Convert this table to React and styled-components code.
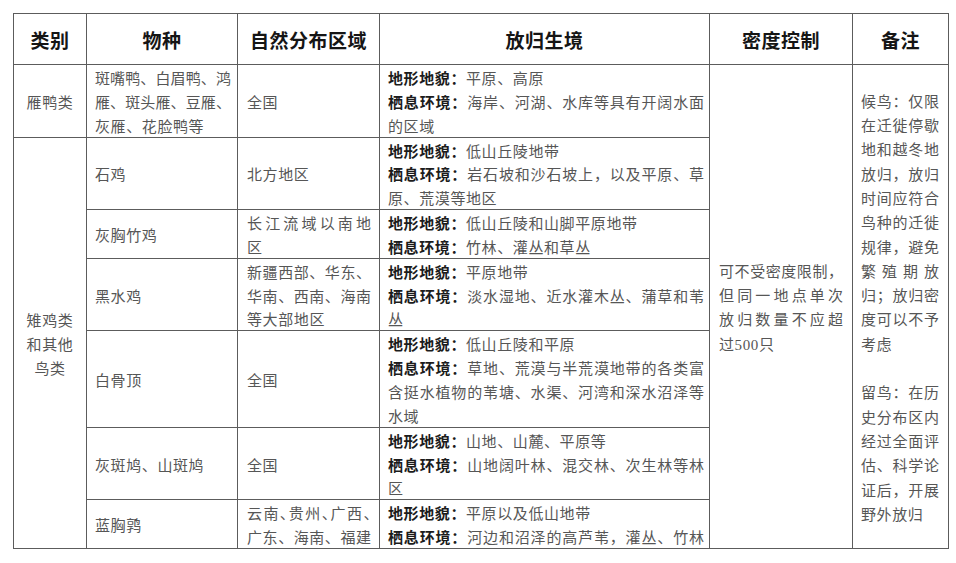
import React from 'react';
import styled, { createGlobalStyle } from 'styled-components';

const Global = createGlobalStyle`
  html, body { margin: 0; padding: 0; background: #ffffff; }
  body { font-family: "Liberation Serif", "Noto Sans CJK SC", serif; }
`;

const Page = styled.div`
  padding: 13px 9px 0 13px;
`;

const Table = styled.table`
  width: 935px;
  border-collapse: collapse;
  table-layout: fixed;
`;

const Col = styled.col`
  width: ${p => p.$w}px;
`;

const HeadCell = styled.th`
  height: 50px;
  padding: 0;
  border: 1px solid #5c5c5c;
  font-family: "Noto Sans CJK SC", sans-serif;
  font-size: 19px;
  font-weight: 700;
  letter-spacing: 0.5px;
  color: #151515;
  text-align: center;
  vertical-align: middle;
`;

const Cell = styled.td`
  --lh: ${p => p.$lh || 23.85}px;
  padding: 0 ${p => p.$pr ?? 8}px 0 ${p => p.$pl ?? 8}px;
  border: 1px solid #5c5c5c;
  vertical-align: middle;
  text-align: ${p => p.$align || 'left'};
  font-size: 15px;
  color: #565656;
`;

/* SimSun-like glyphs sit a little low in their line: the top padding nudges
   the glyphs down while the overall line pitch stays the same */
const Line = styled.div`
  box-sizing: border-box;
  min-height: var(--lh);
  padding-top: 5px;
  line-height: calc(var(--lh) - 5px);
  letter-spacing: ${p => (p.$j ? '0' : '0.6px')};
  text-align: ${p => (p.$j ? 'justify' : 'inherit')};
  text-align-last: ${p => (p.$j ? 'justify' : 'auto')};
  font-feature-settings: ${p => (p.$tight ? '"halt"' : 'normal')};
`;

const Label = styled.span`
  font-weight: 700;
  color: #1c1c1c;
`;

const para = (label, ...lines) =>
  lines.map((t, i) => ({ label: i === 0 ? label : null, t, j: i < lines.length - 1 }));

const Lines = ({ items }) => (
  <>
    {items.map((l, i) => (
      <Line key={i} $j={l.j} $tight={l.tight}>
        {l.label && <Label>{l.label}</Label>}
        {l.t || '\u00a0'}
      </Line>
    ))}
  </>
);

const rows = [
  {
    species: para(null, '斑嘴鸭、白眉鸭、鸿', '雁、斑头雁、豆雁、', '灰雁、花脸鸭等'),
    region: para(null, '全国'),
    habitat: [
      ...para('地形地貌：', '平原、高原'),
      ...para('栖息环境：', '海岸、河湖、水库等具有开阔水面', '的区域'),
    ],
  },
  {
    species: para(null, '石鸡'),
    region: para(null, '北方地区'),
    habitat: [
      ...para('地形地貌：', '低山丘陵地带'),
      ...para('栖息环境：', '岩石坡和沙石坡上，以及平原、草', '原、荒漠等地区'),
    ],
  },
  {
    species: para(null, '灰胸竹鸡'),
    region: para(null, '长江流域以南地', '区'),
    habitat: [
      ...para('地形地貌：', '低山丘陵和山脚平原地带'),
      ...para('栖息环境：', '竹林、灌丛和草丛'),
    ],
  },
  {
    species: para(null, '黑水鸡'),
    region: para(null, '新疆西部、华东、', '华南、西南、海南', '等大部地区'),
    habitat: [
      ...para('地形地貌：', '平原地带'),
      ...para('栖息环境：', '淡水湿地、近水灌木丛、蒲草和苇', '丛'),
    ],
  },
  {
    species: para(null, '白骨顶'),
    region: para(null, '全国'),
    habitat: [
      ...para('地形地貌：', '低山丘陵和平原'),
      ...para('栖息环境：', '草地、荒漠与半荒漠地带的各类富', '含挺水植物的苇塘、水渠、河湾和深水沼泽等', '水域'),
    ],
  },
  {
    species: para(null, '灰斑鸠、山斑鸠'),
    region: para(null, '全国'),
    habitat: [
      ...para('地形地貌：', '山地、山麓、平原等'),
      ...para('栖息环境：', '山地阔叶林、混交林、次生林等林', '区'),
    ],
  },
  {
    species: para(null, '蓝胸鹑'),
    region: [
      { t: '云南、贵州、广西、', j: true, tight: true },
      { t: '广东、海南、福建', j: true },
    ],
    habitat: [
      ...para('地形地貌：', '平原以及低山地带'),
      { label: '栖息环境：', t: '河边和沼泽的高芦苇，灌丛、竹林', j: true },
    ],
  },
];

const density = para(null, '可不受密度限制，', '但同一地点单次', '放归数量不应超', '过500只');

const notes = [
  ...para(null, '候鸟：仅限', '在迁徙停歇', '地和越冬地', '放归，放归', '时间应符合', '鸟种的迁徙', '规律，避免', '繁殖期放', '归；放归密', '度可以不予', '考虑'),
  { t: '' },
  ...para(null, '留鸟：在历', '史分布区内', '经过全面评', '估、科学论', '证后，开展', '野外放归'),
];

const headers = ['类别', '物种', '自然分布区域', '放归生境', '密度控制', '备注'];
const widths = [73, 151, 142, 330, 143, 96];

export default function App() {
  return (
    <Page>
      <Global />
      <Table>
        <colgroup>
          {widths.map((w, i) => (
            <Col key={i} $w={w} />
          ))}
        </colgroup>
        <thead>
          <tr>
            {headers.map(h => (
              <HeadCell key={h}>{h}</HeadCell>
            ))}
          </tr>
        </thead>
        <tbody>
          {rows.map((r, i) => (
            <tr key={i}>
              {i === 0 && (
                <Cell $align="center">
                  <Lines items={para(null, '雁鸭类')} />
                </Cell>
              )}
              {i === 1 && (
                <Cell $align="center" rowSpan={rows.length - 1}>
                  <Lines items={para(null, '雉鸡类', '和其他', '鸟类').map(l => ({ ...l, j: false }))} />
                </Cell>
              )}
              <Cell $pr={6}>
                <Lines items={r.species} />
              </Cell>
              <Cell $pl={9} $pr={8}>
                <Lines items={r.region} />
              </Cell>
              <Cell $pl={8} $pr={5}>
                <Lines items={r.habitat} />
              </Cell>
              {i === 0 && (
                <>
                  <Cell $pl={9} $pr={9} $lh={24.3} rowSpan={rows.length}>
                    <Lines items={density} />
                  </Cell>
                  <Cell $pl={8} $pr={9} $lh={24.3} rowSpan={rows.length}>
                    <Lines items={notes} />
                  </Cell>
                </>
              )}
            </tr>
          ))}
        </tbody>
      </Table>
    </Page>
  );
}
